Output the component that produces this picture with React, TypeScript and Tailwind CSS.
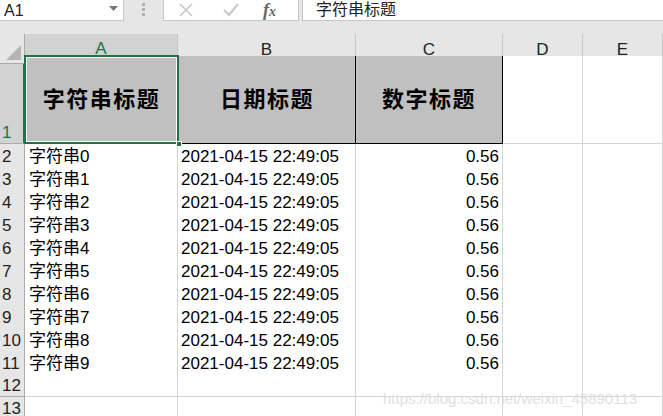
const font = { fontFamily: '"Liberation Sans", "Noto Sans CJK SC", sans-serif' };

const cols = ['A', 'B', 'C', 'D', 'E'];

const rows = Array.from({ length: 10 }, (_, i) => ({
  n: i + 2,
  str: `字符串${i}`,
  date: '2021-04-15 22:49:05',
  num: '0.56',
}));

function FormulaBar() {
  return (
    <div className="flex h-[34px] bg-[#e6e6e6]">
      <div className="relative h-[21px] w-[124px] bg-white border-r border-b border-[#c6c6c6]">
        <span className="absolute left-[4px] top-[-1px] text-[16px] text-[#222]">A1</span>
        <svg className="absolute left-[109px] top-[6px]" width="9" height="5" viewBox="0 0 9 5">
          <polygon points="0,0 9,0 4.5,5" fill="#777" />
        </svg>
      </div>
      <div className="flex w-[39px] flex-col items-center pt-[3px] gap-[2px]">
        <div className="h-[3px] w-[3px] bg-[#b0b0b0]" />
        <div className="h-[3px] w-[3px] bg-[#b0b0b0]" />
        <div className="h-[3px] w-[3px] bg-[#b0b0b0]" />
      </div>
      <div className="relative h-[21px] w-[136px] bg-white border-r border-b border-l border-[#c6c6c6]">
        <svg className="absolute left-[15px] top-[3px]" width="14" height="14" viewBox="0 0 14 14">
          <path d="M1 1 L13 13 M13 1 L1 13" stroke="#c8c8c8" strokeWidth="1.6" />
        </svg>
        <svg className="absolute left-[59px] top-[3px]" width="16" height="14" viewBox="0 0 16 14">
          <path d="M1 7 L6 12 L15 1" stroke="#c8c8c8" strokeWidth="2" fill="none" />
        </svg>
        <span
          className="absolute left-[99px] top-[-3px] text-[18px] italic font-bold text-[#666]"
          style={{ fontFamily: '"Liberation Serif", serif' }}
        >
          f<span className="text-[14px]">x</span>
        </span>
      </div>
      <div className="relative ml-[3px] h-[21px] flex-1 bg-white border-l border-b border-[#c6c6c6]">
        <span className="absolute left-[13px] top-[-2px] text-[16px] text-[#222]">字符串标题</span>
      </div>
    </div>
  );
}

export default function App() {
  const grid = 'grid grid-cols-[25px_153px_178px_147px_80px_1fr]';
  const cell = 'border-r border-b border-[#d4d4d4] bg-white';
  const text = 'pt-[3px] text-[17px] leading-[20px] text-black';
  const rowHead = 'flex items-end pl-[2px] pb-[0px] text-[17px] leading-[20px] text-[#222] bg-[#e6e6e6] border-r border-b border-[#ababab]';

  return (
    <div className="relative h-[416px] w-[663px] overflow-hidden bg-white" style={font}>
      <FormulaBar />

      {/* column headers */}
      <div className={`${grid} h-[22px]`}>
        <div className="relative bg-[#e6e6e6] border-r border-b border-[#ababab]">
          <svg className="absolute right-[3px] bottom-[3px]" width="15" height="15" viewBox="0 0 15 15">
            <polygon points="15,0 15,15 0,15" fill="#b4b4b4" />
          </svg>
        </div>
        {cols.map((c) => (
          <div
            key={c}
            className={`flex items-center justify-center pt-[2px] text-[17px] border-r border-[#c6c6c6] ${
              c === 'A' ? 'bg-[#d2d2d2] text-[#217346] border-b-2 border-b-[#217346]' : 'bg-[#e6e6e6] text-[#222] border-b border-b-[#ababab]'
            }`}
          >
            {c}
          </div>
        ))}
      </div>

      {/* row 1 */}
      <div className={`${grid} h-[88px]`}>
        <div className={`${rowHead} !bg-[#d2d2d2] !text-[#217346] !border-r-2 !border-r-[#217346]`}>1</div>
        <div className="relative bg-[#c0c0c0] border-b border-black">
          <div className="flex h-full items-center justify-center text-[22px] font-bold tracking-[1.5px] text-black">
            字符串标题
          </div>
          <div className="absolute left-[-1px] top-[-1px] right-[-1px] bottom-[-1px] border-2 border-[#217346]">
            <div className="h-full w-full border border-white" />
          </div>
          <div className="absolute right-[-4px] bottom-[-4px] h-[6px] w-[6px] bg-[#217346] border border-white" />
        </div>
        <div className="flex items-center justify-center bg-[#c0c0c0] border-l border-r border-b border-black text-[22px] font-bold tracking-[1.5px] text-black">
          日期标题
        </div>
        <div className="flex items-center justify-center bg-[#c0c0c0] border-r border-b border-black text-[22px] font-bold tracking-[1.5px] text-black">
          数字标题
        </div>
        <div className={cell} />
        <div className={cell} />
      </div>

      {/* data rows */}
      {rows.map((r) => (
        <div key={r.n} className={`${grid} h-[23px]`}>
          <div className={rowHead}>{r.n}</div>
          <div className={`${cell} ${text} pl-[4px]`}>{r.str}</div>
          <div className={`${cell} ${text} pl-[3px]`}>{r.date}</div>
          <div className={`${cell} ${text} pr-[3px] text-right`}>{r.num}</div>
          <div className={cell} />
          <div className={cell} />
        </div>
      ))}

      {[12, 13].map((n) => (
        <div key={n} className={`${grid} h-[23px]`}>
          <div className={rowHead}>{n}</div>
          <div className={cell} />
          <div className={cell} />
          <div className={cell} />
          <div className={cell} />
          <div className={cell} />
        </div>
      ))}

      <div className="absolute left-[383px] top-[388px] text-[15px] text-[#e0e0e0]">
        https://blog.csdn.net/weixin_45890113
      </div>
    </div>
  );
}
